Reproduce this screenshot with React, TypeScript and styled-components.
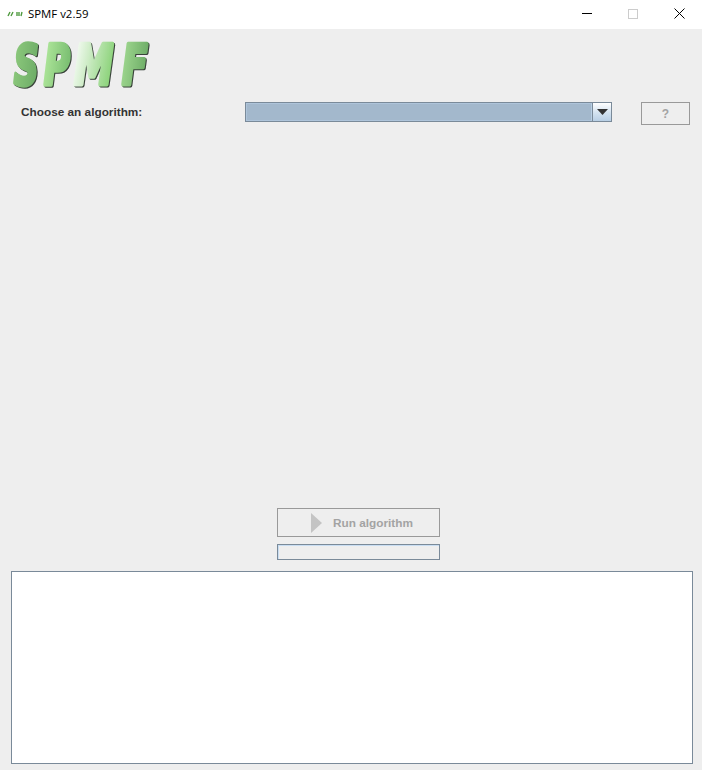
import styled, { createGlobalStyle } from "styled-components"

const GlobalStyle = createGlobalStyle`
    html, body {
        margin: 0;
        padding: 0;
        background-color: #eeeeee;
    }
`

const WindowStyled = styled.div`
    display: flex;
    flex-direction: column;
    width: 702px;
    height: 770px;
    overflow: hidden;
    background-color: #eeeeee;
    font-family: "Liberation Sans", Arial, sans-serif;
`

const TitleBarStyled = styled.div`
    display: flex;
    align-items: center;
    box-sizing: border-box;
    height: 29px;
    padding-bottom: 2px;
    flex-shrink: 0;
    background-color: #ffffff;
`

const TitleIconStyled = styled.svg`
    width: 16px;
    height: 8px;
    margin-left: 7px;
    margin-right: 5px;
`

const TitleTextStyled = styled.div`
    flex: 1;
    font-family: "Open Sans", "Noto Sans", sans-serif;
    font-size: 11.4px;
    color: #000000;
`

const WindowButtonStyled = styled.div`
    display: flex;
    justify-content: center;
    align-items: center;
    width: 46px;
    height: 27px;

    svg {
        display: block;
    }
`

const LogoRowStyled = styled.div`
    height: 60px;
    margin-top: 11px;
    margin-bottom: 2px;
    padding-left: 12px;
`

const LogoSvgStyled = styled.svg`
    display: block;
    overflow: visible;
    filter: drop-shadow(1px 1px 0 #39423a);
`

const FormRowStyled = styled.div`
    display: flex;
    align-items: flex-start;
    padding-left: 21px;
`

const LabelStyled = styled.div`
    width: 224px;
    height: 20px;
    line-height: 21px;
    font-size: 11.8px;
    font-weight: bold;
    color: #333333;
`

const ComboStyled = styled.div`
    display: flex;
    box-sizing: border-box;
    width: 367px;
    height: 20px;
    border: 1px solid #7a8a99;
    background-color: #a3b8cc;
`

const ComboFieldStyled = styled.div`
    flex: 1;
    border: 1px solid #aec4da;
    border-right: 1px solid #b8cfe5;
`

const ComboArrowStyled = styled.div`
    display: flex;
    justify-content: center;
    align-items: center;
    width: 18px;
    border-left: 1px solid #7a8a99;
    background: linear-gradient(#ffffff, #d3e2f0 55%, #b8cfe5);
`

const HelpButtonStyled = styled.div`
    display: flex;
    justify-content: center;
    align-items: center;
    box-sizing: border-box;
    width: 49px;
    height: 23px;
    margin-left: 29px;
    border: 1px solid #999999;
    font-size: 12px;
    font-weight: bold;
    color: #a3a3a3;
`

const SpacerStyled = styled.div`
    flex: 1;
`

const RunColumnStyled = styled.div`
    display: flex;
    flex-direction: column;
    gap: 7px;
    width: 163px;
    margin-left: 277px;
`

const RunButtonStyled = styled.div`
    display: flex;
    align-items: center;
    box-sizing: border-box;
    height: 29px;
    padding-left: 33px;
    border: 1px solid #999999;
    font-size: 11.8px;
    font-weight: bold;
    color: #a3a3a3;

    svg {
        display: block;
        margin-right: 11px;
    }
`

const ProgressStyled = styled.div`
    box-sizing: border-box;
    height: 16px;
    border: 1px solid #7a8a99;
    box-shadow: inset 1px 1px 0 #c8ddf2;
`

const OutputStyled = styled.div`
    box-sizing: border-box;
    height: 193px;
    margin: 11px 9px 6px 11px;
    border: 1px solid #7a8a99;
    background-color: #ffffff;
`

const logoLetters = [
    { letter: "S", x: 2, scale: 0.62, stops: ["#8fcb7e", "#6fae68"] },
    { letter: "P", x: 32, scale: 0.64, stops: ["#b5eb9f", "#7cc073"] },
    { letter: "M", x: 62, scale: 0.72, stops: ["#ffffff", "#8fd47e"] },
    { letter: "F", x: 110, scale: 0.68, stops: ["#a5dc94", "#6fae68"] },
]

const Logo = () => (
    <LogoSvgStyled width="142" height="60" viewBox="0 0 142 60">
        <defs>
            {logoLetters.map(({ letter, stops }) => (
                <linearGradient key={letter} id={`logoFill${letter}`} x1="0" y1="0" x2="1" y2="0.3">
                    <stop offset="0" stopColor={stops[0]} />
                    <stop offset="1" stopColor={stops[1]} />
                </linearGradient>
            ))}
        </defs>
        {logoLetters.map(({ letter, x, scale }) => (
            <g key={letter} transform={`translate(${x} 44) scale(${scale} 1)`}>
                <text
                    x="0"
                    y="0"
                    fontFamily="'DejaVu Sans', sans-serif"
                    fontWeight="bold"
                    fontStyle="italic"
                    fontSize="55"
                    fill={`url(#logoFill${letter})`}
                    stroke={`url(#logoFill${letter})`}
                    strokeWidth="4.5"
                    strokeLinejoin="round"
                >
                    {letter}
                </text>
            </g>
        ))}
    </LogoSvgStyled>
)

export default function App() {
    return (
        <>
            <GlobalStyle />
            <WindowStyled>
                <TitleBarStyled>
                    <TitleIconStyled viewBox="0 0 16 8">
                        <path d="M1 6L3 2M4 6L6 2M10 6V2M12 6V2M14 6L15 2" stroke="#4f9a3f" strokeWidth="1.4" fill="none" />
                    </TitleIconStyled>
                    <TitleTextStyled>SPMF v2.59</TitleTextStyled>
                    <WindowButtonStyled>
                        <svg width="10" height="1"><rect width="10" height="1" fill="#000000" /></svg>
                    </WindowButtonStyled>
                    <WindowButtonStyled>
                        <svg width="10" height="10"><rect x="0.5" y="0.5" width="9" height="9" fill="none" stroke="#cccccc" /></svg>
                    </WindowButtonStyled>
                    <WindowButtonStyled>
                        <svg width="11" height="11"><path d="M0.5 0.5L10.5 10.5M10.5 0.5L0.5 10.5" stroke="#000000" fill="none" /></svg>
                    </WindowButtonStyled>
                </TitleBarStyled>
                <LogoRowStyled>
                    <Logo />
                </LogoRowStyled>
                <FormRowStyled>
                    <LabelStyled>Choose an algorithm:</LabelStyled>
                    <ComboStyled>
                        <ComboFieldStyled />
                        <ComboArrowStyled>
                            <svg width="11" height="6"><path d="M0 0H11L5.5 6Z" fill="#333333" /></svg>
                        </ComboArrowStyled>
                    </ComboStyled>
                    <HelpButtonStyled>?</HelpButtonStyled>
                </FormRowStyled>
                <SpacerStyled />
                <RunColumnStyled>
                    <RunButtonStyled>
                        <svg width="11" height="20"><path d="M0 0L11 10L0 20Z" fill="#c4c4c4" /></svg>
                        Run algorithm
                    </RunButtonStyled>
                    <ProgressStyled />
                </RunColumnStyled>
                <OutputStyled />
            </WindowStyled>
        </>
    )
}
